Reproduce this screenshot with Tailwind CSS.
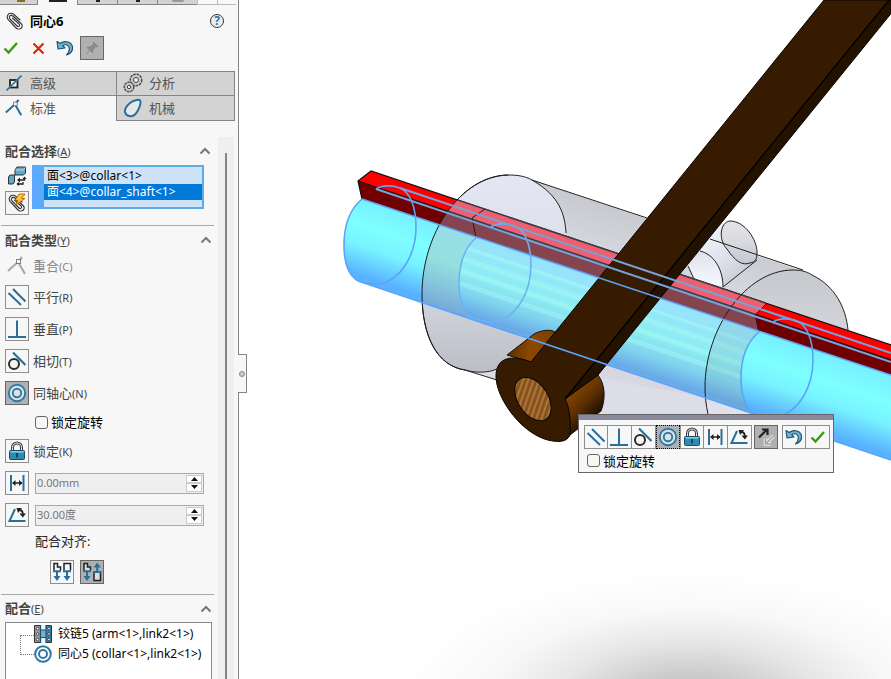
<!DOCTYPE html>
<html lang="zh-CN">
<head>
<meta charset="utf-8">
<title>同心6</title>
<script src="https://cdn.jsdelivr.net/npm/@tailwindcss/browser@4"></script>
</head>
<body class="h-screen overflow-hidden flex bg-white text-[#444] text-[13px] leading-4 font-['Noto_Sans','Noto_Sans_CJK_SC',sans-serif]">

<svg class="hidden" aria-hidden="true">
  <defs>
    <symbol id="i-clip" viewBox="0 0 18 18"><g fill="none" stroke="#333" stroke-width="1.1" stroke-linecap="round"><path d="M14 8 8 2.500C5.500.5 3 1 1.800 3S1.200 6.500 2.500 8L9.500 15.500C11.500 17.500 14 17.300 15.300 16S16.500 13 15 11.500L7 4C5.500 3 4 3.200 3.500 4.500S3.500 6.500 4.500 7.500L11 14C12 15 13.300 14.500 13.500 13.500S13 12 12.500 11.500L6.500 6"/></g></symbol>
    <symbol id="i-check" viewBox="0 0 16 16"><path d="M1.500 8.500 5.500 12.500 14 3" fill="none" stroke="#3a9c0c" stroke-width="2.400"/></symbol>
    <symbol id="i-undo" viewBox="1 1 22 22"><path d="M4 5.500 5 13 12 12 9.700 9.700C12.500 7.800 16 9 16.300 12.500 16.500 15 15.500 17 13.500 19 18 17.500 20 14.500 19.500 11 18.800 6 12 3.800 7.300 7.500Z" fill="#6db3cf" stroke="#1d4f6b" stroke-width="1.100" stroke-linejoin="round"/></symbol>
    <symbol id="i-par" viewBox="1 1 22 22"><path d="M3.500 8 16 20M8 4 20.500 16.500" stroke="#28709a" stroke-width="2"/></symbol>
    <symbol id="i-perp" viewBox="1 1 22 22"><path d="M12 3.500V20M3 20H21" stroke="#28709a" stroke-width="2"/></symbol>
    <symbol id="i-tan" viewBox="1 1 22 22"><path d="M8 3.500 20.500 16" stroke="#28709a" stroke-width="2.200"/><circle cx="9" cy="15" r="5" fill="#f4f4f4" stroke="#2b2b2b" stroke-width="2"/></symbol>
    <symbol id="i-con" viewBox="1 1 22 22"><circle cx="12" cy="12" r="9" fill="#dbe3e6"/><g fill="none" stroke="#2f78a3" stroke-width="1.900"><circle cx="12" cy="12" r="8.200"/><circle cx="12" cy="12" r="4.200"/></g></symbol>
    <symbol id="i-lock" viewBox="1 1 22 22"><path d="M7.500 12V8.500C7.500 2.500 16.500 2.500 16.500 8.500V12" fill="none" stroke="#3d3d3d" stroke-width="3"/><path d="M7.500 12V8.500C7.500 2.500 16.500 2.500 16.500 8.500V12" fill="none" stroke="#eee" stroke-width="1"/><rect x="4.500" y="11.500" width="15" height="9" rx="1" fill="#2f8ab2" stroke="#174b66"/><path d="M5.500 12.800H18.500" stroke="#8cd0e8" stroke-width="1.500"/><path d="M12 14V18.500" stroke="#12384d" stroke-width="1.600"/></symbol>
    <symbol id="i-dist" viewBox="1 1 22 22"><path d="M6 4V20M18.500 4V20" stroke="#28709a" stroke-width="2"/><path d="M8 12H17" stroke="#222" stroke-width="1.500"/><path d="M7 12 10.500 9V15ZM17.500 12 14 9V15Z" fill="#222"/></symbol>
    <symbol id="i-ang" viewBox="1 1 22 22"><path d="M10 6 4.500 18H20.500" fill="none" stroke="#28709a" stroke-width="2"/><path d="M14 7C16.500 7 17.800 8.500 17.800 11" fill="none" stroke="#222" stroke-width="1.800"/><path d="M11.500 5H17L13 10ZM14.500 10.500H21L17.800 14.500Z" fill="#222"/></symbol>
    <symbol id="i-coin" viewBox="1 1 22 22"><path d="M3 17 14 7M12.500 7 20 20M14 7 17 3" fill="none" stroke="currentColor" stroke-width="2.200"/><rect x="11.500" y="5.500" width="4" height="4" fill="#f7f7f7" stroke="#555" stroke-opacity=".7"/></symbol>
    <symbol id="i-flip" viewBox="1 1 22 22"><path d="M19.500 11 12.500 18M11.500 13.500V19H17" fill="none" stroke="#e8e8e8" stroke-width="3.600"/><path d="M19.500 11 12.500 18M11.500 13.500V19H17" fill="none" stroke="#a5a5a5" stroke-width="1.600"/><path d="M5 12.500 12.500 5M8 4.500H13.500V10" fill="none" stroke="#222" stroke-width="2.200"/></symbol>
    <symbol id="i-up" viewBox="0 0 12 8"><path d="M1.500 6.500 6 2 10.500 6.500" fill="none" stroke="#777" stroke-width="2"/></symbol>
    <symbol id="i-gear" viewBox="0 0 20 20"><g fill="#c8c8c8" stroke="#444"><circle cx="13" cy="7" r="5.800" stroke-dasharray="2.600 .8" stroke-width="1.300"/><circle cx="13" cy="7" r="2.500" fill="#eee"/><circle cx="6" cy="14" r="4.800" stroke-dasharray="2.600 .8" stroke-width="1.300"/><circle cx="6" cy="14" r="1.700" fill="#eee"/></g></symbol>
    <symbol id="i-arrowdn" viewBox="0 0 8 12"><path d="M0 1.200H8M4 1V7" stroke="#28709a" stroke-width="2"/><path d="M.5 6H7.500L4 11Z" fill="#28709a"/></symbol>
  </defs>
</svg>

<!-- Property panel -->
<aside class="relative w-[239px] shrink-0 h-full flex flex-col bg-[#f7f7f7] border-r border-[#858585]">
  <div class="flex h-[5px] shrink-0 overflow-hidden">
    <span class="w-[38px] bg-[#d3d3d3] border-r border-b border-[#858585] flex justify-end pr-3"><i class="w-2 h-[2px] bg-[#8c6b20]"></i></span>
    <span class="w-[39px] flex justify-center"><i class="w-[18px] h-[2px] bg-[#222]"></i></span>
    <span class="w-[41px] bg-[#d3d3d3] border-x border-b border-[#858585] flex justify-center"><i class="w-1 h-[2px] bg-[#222]"></i></span>
    <span class="w-10 bg-[#d3d3d3] border-r border-b border-[#858585] flex justify-center"><i class="w-1 h-[2px] bg-[#222]"></i></span>
    <span class="w-[39px] bg-[#d3d3d3] border-b border-[#858585] flex justify-center"><i class="w-3 h-[2px] rounded-b-full bg-[#999]"></i></span>
    <span class="w-[21px] border-x border-b border-[#bbb]"></span>
    <span class="w-[18px] border-b border-[#bbb]"></span>
  </div>
  <header class="flex items-center h-8 shrink-0 pl-1.5 pr-3.5">
    <svg class="size-[18px]"><use href="#i-clip"/></svg>
    <h1 class="ml-1.5 flex-1 font-bold text-[13px] text-black">同心6</h1>
    <button aria-label="帮助" class="size-[14px] rounded-full border border-[#333] bg-[#eee] text-[#2477a5] text-[12px] leading-3 font-bold flex items-center justify-center">?</button>
  </header>
  <div class="flex items-center h-[22px] shrink-0 pl-[3px] gap-3">
    <button aria-label="确定"><svg class="size-4"><use href="#i-check"/></svg></button>
    <button aria-label="取消"><svg class="size-4" viewBox="0 0 16 16"><path d="M2.500 3.500 12.500 13.500M12.500 3.500 2.500 13.500" stroke="#dc2600" stroke-width="2.200"/></svg></button>
    <div class="-ml-[5px] flex items-center gap-1">
      <button aria-label="撤消"><svg class="size-[22px]"><use href="#i-undo"/></svg></button>
      <button aria-label="保持可见" class="size-6 border border-[#666] bg-[#b0b0b0] flex items-center justify-center"><svg class="size-4" viewBox="0 0 16 16"><path d="M2 14 6 10 3 7.500 6 7 9.500 4.500V2L14 6.500H11.500L9 10 8.500 13 6 10" fill="#8b8b8b" stroke="#828282" stroke-width=".8"/></svg></button>
    </div>
  </div>
  <nav class="mt-3 mr-[3px] grid grid-cols-[116px_1fr] auto-rows-[25px] shrink-0 text-[#555]">
    <button class="flex items-center pl-1.5 gap-2 pb-px bg-[#d3d3d3] border-y border-[#858585]"><svg class="size-4" viewBox="0 0 16 16"><rect x="4" y="5" width="7.500" height="7.500" fill="#eee" stroke="#222" stroke-width="1.800"/><path d="M.5 15.500 15.500.5" stroke="#2f78a3" stroke-width="1.600"/></svg>高级</button>
    <button class="flex items-center pl-1.5 gap-1.5 pb-px bg-[#d3d3d3] border border-[#858585]"><svg class="size-5"><use href="#i-gear"/></svg>分析</button>
    <button class="flex items-center pl-1 gap-1.5 pb-px text-[#28709a]"><svg class="size-5"><use href="#i-coin"/></svg><span class="text-[#555]">标准</span></button>
    <button class="flex items-center pl-1.5 gap-1.5 pb-px bg-[#d3d3d3] border border-t-0 border-[#858585]"><svg class="size-5" viewBox="0 0 20 20"><path d="M7 5C11 2 17 .5 17.500 3.500 18 6 15.500 13 12 16.500 9 19.500 3 18.500 2 14 1.500 10.500 4 7.500 7 5Z" fill="#e4e9eb" stroke="#28709a" stroke-width="2"/></svg>机械</button>
  </nav>

  <div class="flex flex-1 min-h-0 pt-4 pr-1">
    <div class="flex-1 min-w-0 flex flex-col">
      <section class="px-[5px] pb-2.5">
        <h2 class="flex items-center h-7 pr-0.5 font-bold text-[#444]"><span class="flex-1">配合选择<span class="font-normal text-[11px]">(<u>A</u>)</span></span><svg class="w-3 h-2"><use href="#i-up"/></svg></h2>
        <div class="flex gap-[3px] pr-[9px]">
          <div class="w-6 flex flex-col items-center gap-1">
            <svg class="w-5 h-[22px]" viewBox="0 0 20 22"><g stroke="#222" stroke-width=".9"><path d="M8 5 10 2H18.500V8L16.500 10H8Z" fill="#5fa8c8"/><path d="M8.500 5H16.500L18 2.500" stroke="#bfe3f0" fill="none"/><path d="M1.500 12 3 10H7.500V17L6 19H1.500Z" fill="#5fa8c8"/></g><path d="M17.500 13V15H12M10 19H16V17" fill="none" stroke="#222" stroke-width="1.300"/><path d="M13 12.500V17.500L10 15ZM15.500 14H19.500L17.500 11.500ZM12 17V21L9.500 19Z" fill="#222"/></svg>
            <button aria-label="多配合模式" class="size-6 border border-[#8e8e8e] bg-[#f4f4f4] flex items-center justify-center"><svg class="size-5" viewBox="0 0 20 20"><svg width="18" height="18" x="1" y="1"><use href="#i-clip"/></svg><path d="M12 1H18L14.500 5.500H18L8 12.500 11 7.500H8Z" fill="#ffc52e" stroke="#a55a00" stroke-width=".8"/></svg></button>
          </div>
          <div class="flex-1 min-w-0 flex h-11">
            <div class="w-2.5 bg-[#5aa9ff]"></div>
            <ul role="listbox" aria-label="要配合的实体" class="flex-1 min-w-0 border-2 border-[#5aade8] bg-[#cfe3f8] text-black text-[12px] leading-4 pt-px whitespace-nowrap">
              <li role="option" class="pl-[3px]">面&lt;3&gt;@collar&lt;1&gt;</li>
              <li role="option" aria-selected="true" class="pl-[3px] bg-[#0078d7] text-white">面&lt;4&gt;@collar_shaft&lt;1&gt;</li>
            </ul>
          </div>
        </div>
      </section>

      <section class="ml-px mr-1 border-t border-[#a9a9a9] pl-1 pr-1.5 pb-2.5">
        <h2 class="flex items-center h-7 font-bold"><span class="flex-1">配合类型<span class="font-normal text-[11px]">(<u>Y</u>)</span></span><svg class="w-3 h-2 -mr-1"><use href="#i-up"/></svg></h2>
        <button class="flex items-center gap-1 h-6 mb-[3px] text-[#888]"><span class="size-6 flex items-center justify-center text-[#aaa]"><svg class="size-[22px]"><use href="#i-coin"/></svg></span><span>重合<span class="text-[11px]">(C)</span></span></button>
        <button class="flex items-center gap-1 h-8"><span class="size-6 border border-[#8e8e8e]"><svg class="size-[22px]"><use href="#i-par"/></svg></span><span>平行<span class="text-[11px]">(R)</span></span></button>
        <button class="flex items-center gap-1 h-8"><span class="size-6 border border-[#8e8e8e]"><svg class="size-[22px]"><use href="#i-perp"/></svg></span><span>垂直<span class="text-[11px]">(P)</span></span></button>
        <button class="flex items-center gap-1 h-8"><span class="size-6 border border-[#8e8e8e]"><svg class="size-[22px]"><use href="#i-tan"/></svg></span><span>相切<span class="text-[11px]">(T)</span></span></button>
        <button aria-pressed="true" class="flex items-center gap-1 h-8"><span class="size-6 border border-[#666] bg-[#b0b0b0]"><svg class="size-[22px]"><use href="#i-con"/></svg></span><span>同轴心<span class="text-[11px]">(N)</span></span></button>
        <label class="flex items-center gap-[3px] h-[26px] pl-[30px] text-black"><input type="checkbox" class="appearance-none size-[13px] rounded-[3px] border border-[#666] bg-[#f7f7f7]">锁定旋转</label>
        <button class="flex items-center gap-1 h-8"><span class="size-6 border border-[#8e8e8e]"><svg class="size-[22px]"><use href="#i-lock"/></svg></span><span>锁定<span class="text-[11px]">(K)</span></span></button>
        <div class="flex items-center gap-1.5 h-8 pr-1">
          <button aria-label="距离" class="size-6 shrink-0 border border-[#8e8e8e]"><svg class="size-[22px]"><use href="#i-dist"/></svg></button>
          <div class="flex-1 min-w-0 flex h-[21px] border border-[#a9a9a9] bg-[#efefef] p-px">
            <input aria-label="距离值" value="0.00mm" class="flex-1 min-w-0 text-[11px] text-[#777]">
            <div class="w-4 flex flex-col text-[#111]">
              <button aria-label="增加" class="flex-1 bg-white border border-[#ccc] flex items-center justify-center"><svg class="w-[7px] h-1" viewBox="0 0 7 4"><path d="M0 4 3.500 0 7 4Z" fill="currentColor"/></svg></button>
              <button aria-label="减少" class="flex-1 bg-white border border-[#ccc] flex items-center justify-center"><svg class="w-[7px] h-1" viewBox="0 0 7 4"><path d="M0 0 3.500 4 7 0Z" fill="currentColor"/></svg></button>
            </div>
          </div>
        </div>
        <div class="flex items-center gap-1.5 h-8 pr-1">
          <button aria-label="角度" class="size-6 shrink-0 border border-[#8e8e8e]"><svg class="size-[22px]"><use href="#i-ang"/></svg></button>
          <div class="flex-1 min-w-0 flex h-[21px] border border-[#a9a9a9] bg-[#efefef] p-px">
            <input aria-label="角度值" value="30.00度" class="flex-1 min-w-0 text-[11px] text-[#777]">
            <div class="w-4 flex flex-col text-[#111]">
              <button aria-label="增加" class="flex-1 bg-white border border-[#ccc] flex items-center justify-center"><svg class="w-[7px] h-1" viewBox="0 0 7 4"><path d="M0 4 3.500 0 7 4Z" fill="currentColor"/></svg></button>
              <button aria-label="减少" class="flex-1 bg-white border border-[#ccc] flex items-center justify-center"><svg class="w-[7px] h-1" viewBox="0 0 7 4"><path d="M0 0 3.500 4 7 0Z" fill="currentColor"/></svg></button>
            </div>
          </div>
        </div>
        <p class="h-5 leading-5 pl-[30px] text-[#222]">配合对齐:</p>
        <div class="flex gap-1.5 pt-[9px] pl-[45px]">
          <button aria-label="同向对齐" class="size-6 border border-[#8e8e8e]"><svg class="size-[22px]" viewBox="1 1 22 22"><path d="M4 10.500V3.500H7.500V7H10.500V10.500M14 10.500V3.500H20.500V10.500" fill="none" stroke="#222" stroke-width="1.500"/><svg x="3" y="10" width="8" height="12"><use href="#i-arrowdn"/></svg><svg x="13" y="10" width="8" height="12"><use href="#i-arrowdn"/></svg></svg></button>
          <button aria-label="反向对齐" aria-pressed="true" class="size-6 border border-[#666] bg-[#b0b0b0]"><svg class="size-[22px]" viewBox="1 1 22 22"><path d="M4 10.500V3.500H7.500V7H10.500V10.500M14 13V20.500H20.500V13" fill="#ddd" stroke="#222" stroke-width="1.500"/><svg x="3" y="10" width="8" height="12"><use href="#i-arrowdn"/></svg><path d="M13 12H21.500M17.200 12V7" stroke="#28709a" stroke-width="2"/><path d="M13.500 7.500H21L17.200 2.500Z" fill="#28709a"/></svg></button>
        </div>
      </section>

      <section class="ml-px mr-1 border-t border-[#a9a9a9] pl-1 pr-0.5 flex-1 min-h-0 flex flex-col">
        <h2 class="flex items-center h-[27px] shrink-0 font-bold"><span class="flex-1">配合<span class="font-normal text-[11px]">(<u>E</u>)</span></span><svg class="w-3 h-2"><use href="#i-up"/></svg></h2>
        <ul class="relative flex-1 border border-b-0 border-[#858990] bg-white pt-px pl-7 text-black text-[12px] whitespace-nowrap overflow-hidden">
          <li class="absolute left-3.5 top-3 w-3.5 h-5 border border-r-0 border-dotted border-[#777]" aria-hidden="true"></li>
          <li class="flex items-center h-5 gap-1.5"><svg class="size-[18px] shrink-0" viewBox="0 0 18 18"><path d="M.5.5H17.500V17.500H.5Z" fill="#999" stroke="#333"/><path d="M7 0H12V18H7Z" fill="#e8f5fa"/><path d="M12.500 1H17V17H12.500Z" fill="#3285aa"/><path d="M6.500 5H12V12.500H6.500Z" fill="#6fb6d2"/><path d="M6.500 0V18M12 0V18M6 5H12M6 12.500H12" stroke="#1d4f6b" stroke-width="1.200"/><g fill="#fff" stroke="#222" stroke-width=".7"><circle cx="3.500" cy="3.500" r="1.300"/><circle cx="3.500" cy="9" r="1.300"/><circle cx="3.500" cy="14.500" r="1.300"/><circle cx="15" cy="3.500" r="1.300"/><circle cx="15" cy="9" r="1.300"/><circle cx="15" cy="14.500" r="1.300"/></g></svg><span>铰链5 (arm&lt;1&gt;,link2&lt;1&gt;)</span></li>
          <li class="flex items-center h-5 gap-1.5"><svg class="size-[18px] shrink-0" viewBox="0 0 18 18"><g fill="none" stroke="#2f78a3" stroke-width="2"><circle cx="9" cy="9" r="7.800"/><circle cx="9" cy="9" r="4"/></g></svg><span>同心5 (collar&lt;1&gt;,link2&lt;1&gt;)</span></li>
        </ul>
      </section>
    </div>
    <div class="w-4 bg-[#efefef] pt-4 flex justify-center" aria-hidden="true"><div class="w-[2px] bg-[#858585]"></div></div>
  </div>
  <button aria-label="折叠面板" class="absolute z-10 -right-[9px] top-[354px] w-[9px] h-[39px] bg-[#f7f7f7] border border-l-0 border-[#858585] flex items-center justify-center"><span class="size-[6px] rounded-full border border-[#888] bg-[#ccc]"></span></button>
</aside>

<!-- Graphics area -->
<main class="relative flex-1 min-w-0 bg-white">
  <svg class="block w-full h-full" viewBox="239 0 652 679" preserveAspectRatio="xMinYMin slice" role="img" aria-label="装配体模型">
    <defs>
      <radialGradient id="floor" gradientUnits="userSpaceOnUse" cx="0" cy="0" r="1" gradientTransform="translate(690 700) scale(290 128)"><stop offset="0" stop-color="#bdbdbd"/><stop offset=".2" stop-color="#cbcbcb"/><stop offset=".45" stop-color="#e6e6e6"/><stop offset=".7" stop-color="#f8f8f8"/><stop offset="1" stop-color="#fff"/></radialGradient>
      <linearGradient id="shaft" gradientUnits="userSpaceOnUse" x1="362" y1="199" x2="336" y2="276"><stop offset="0" stop-color="#78f0ff"/><stop offset=".3" stop-color="#7dffff"/><stop offset=".55" stop-color="#78f3ff"/><stop offset=".9" stop-color="#58b2ff"/><stop offset="1" stop-color="#58b2ff"/></linearGradient>
      <linearGradient id="shaftIn" gradientUnits="userSpaceOnUse" x1="476" y1="237" x2="450" y2="314"><stop offset="0" stop-color="#98e2fc"/><stop offset=".45" stop-color="#8ceef2"/><stop offset=".7" stop-color="#80d4ee"/><stop offset=".92" stop-color="#68aae8"/><stop offset="1" stop-color="#70b2ea"/></linearGradient>
      <linearGradient id="shaftVeil" gradientUnits="userSpaceOnUse" x1="362" y1="199" x2="336" y2="276"><stop offset="0" stop-color="#98dde8"/><stop offset=".4" stop-color="#95e0df"/><stop offset=".7" stop-color="#86c5da"/><stop offset="1" stop-color="#72a5da"/></linearGradient>
      <linearGradient id="faceL" x1="0" y1="0" x2="0" y2="1"><stop offset="0" stop-color="#e4e6f4"/><stop offset=".5" stop-color="#dadce6"/><stop offset="1" stop-color="#bcbec6"/></linearGradient>
      <linearGradient id="body" gradientUnits="userSpaceOnUse" x1="690" y1="230" x2="635" y2="420"><stop offset="0" stop-color="#c8cacf"/><stop offset=".35" stop-color="#dcdee8"/><stop offset=".8" stop-color="#d6d6e0"/><stop offset="1" stop-color="#e6e6f2"/></linearGradient>
      <linearGradient id="faceR" x1="0" y1="0" x2="0" y2="1"><stop offset="0" stop-color="#c6c8cd"/><stop offset=".5" stop-color="#d5d7dd"/><stop offset="1" stop-color="#e2e2ee"/></linearGradient>
      <linearGradient id="boss" gradientUnits="userSpaceOnUse" x1="705" y1="235" x2="750" y2="285"><stop offset="0" stop-color="#f0f1fa"/><stop offset=".5" stop-color="#dcdfe9"/><stop offset="1" stop-color="#c0c2ca"/></linearGradient>
      <linearGradient id="bossFace" x1="0" y1="0" x2="0" y2="1"><stop offset="0" stop-color="#dfe1ec"/><stop offset="1" stop-color="#f8f9ff"/></linearGradient>
      <linearGradient id="bossTop" x1="0" y1="0" x2="0" y2="1"><stop offset="0" stop-color="#e4e4e6"/><stop offset=".5" stop-color="#d9dade"/><stop offset="1" stop-color="#c4c6d2"/></linearGradient>
      <linearGradient id="hubTop" gradientUnits="userSpaceOnUse" x1="510" y1="345" x2="550" y2="352"><stop offset="0" stop-color="#5a3000"/><stop offset=".5" stop-color="#8c4800"/><stop offset="1" stop-color="#7c4000"/></linearGradient>
      <linearGradient id="hubSide" gradientUnits="userSpaceOnUse" x1="572" y1="388" x2="600" y2="415"><stop offset="0" stop-color="#8a4600"/><stop offset=".5" stop-color="#5c2f00"/><stop offset="1" stop-color="#150b00"/></linearGradient>
      <pattern id="bore" width="40" height="5" patternUnits="userSpaceOnUse" patternTransform="rotate(-38)"><rect width="40" height="5" fill="#8a5219"/><path d="M0 2H40" stroke="#b08350" stroke-width="1.600"/></pattern>
      <pattern id="stripes" width="14" height="12" patternUnits="userSpaceOnUse" patternTransform="translate(476 248) rotate(18.400)"><rect width="14" height="5" fill="#b0fff4" fill-opacity=".35"/></pattern>
      <path id="shaftEnd" d="M362 199C350 209 344 225 344 245C344 267 351 281 364 283L380 284C402 279 416 254 416 227C416 207 410 192 400 188C392 185 382 185 376 189"/>
      <path id="collarL" d="M508 175C460 176 422 234 422 294C422 336 437 366 465 370C478 373 489 372 497 369L566 345V233C565 215 560 196 532 180C525 176 517 175 508 175Z"/>
      <clipPath id="inside"><path d="M508 175C460 176 422 234 422 294C422 336 437 366 465 370L708 460L764 417C748 415 741 399 741 377C741 357 748 342 759 332L755 315L766 304V290Z"/></clipPath>
      <clipPath id="core"><path d="M476 237C465 247 458 263 458 283C458 303 464 318 478 322L764 417C748 415 741 399 741 377C741 357 748 342 759 332Z"/></clipPath>
    </defs>
    <rect x="239" y="560" width="652" height="119" fill="url(#floor)"/>

    <!-- collar -->
    <path d="M532 180 803 271 848 340V415H640L465 370 508 300Z" fill="url(#body)"/>
    <path d="M497 380 465 370 500 360 720 400V415H600Z" fill="#dddde8"/>
    <use href="#collarL" fill="url(#faceL)"/>
    <path d="M793 270C745 270 705 330 705 387C705 397 706 405 708 415H848V330C846 308 835 286 812 275C806 271 800 270 793 270Z" fill="url(#faceR)"/>
    <path d="M700 251 721 222 757 252V262L722 288 694 290Z" fill="url(#boss)"/>
    <path d="M700 251C713 254 723 268 723 287L694 279 688 266Z" fill="url(#bossFace)"/>
    <path d="M730 221C720 222 718 240 727 249C735 261 742 266 750 263C756 262 757 258 757 252C757 240 745 221 730 221Z" fill="url(#bossTop)"/>
    <g fill="none" stroke="#222" stroke-width="1">
      <path d="M532 180 647 218M497 369C488 373 475 373 465 370L497 380M710 239 803 270M793 270C800 270 806 271 812 275C835 286 846 308 848 330"/>
      <path d="M566 233C565 215 560 196 532 180C525 176 517 175 508 175C460 176 422 234 422 294C422 336 437 366 465 370"/>
      <path d="M700 251C713 254 723 268 723 287L757 260M688 266 694 279M730 221C720 222 718 240 727 249C735 261 742 266 750 263C756 262 757 258 757 252C757 240 745 221 730 221Z"/>
    </g>

    <!-- key and shaft outside the collar -->
    <path d="M362 199C350 209 344 225 344 245C344 267 351 281 364 283L900 463V378Z" fill="url(#shaft)"/>
    <path d="M358 181 900 363V378L362 199Z" fill="#700000"/>
    <path d="M358 181 371 171 900 348V363Z" fill="#ff0000"/>
    <path d="M362 199 358 181 371 171 900 348M358 181 900 363" fill="none" stroke="#111" stroke-width="1.200"/>

    <!-- key and shaft seen through the collar -->
    <g clip-path="url(#inside)">
      <path d="M362 199 364 283 900 463V378Z" fill="url(#shaftVeil)"/>
      <g clip-path="url(#core)"><path d="M440 225 440 310 780 424V339Z" fill="url(#shaftIn)"/><path d="M440 237 440 285 780 399V351Z" fill="url(#stripes)"/><path d="M730 310C712 338 705 362 705 387L708 415H770V310Z" fill="#7f98a4" fill-opacity=".16"/></g>
      <path d="M358 181 900 363V378L362 199Z" fill="#84454f"/>
      <path d="M358 181 371 171 900 348V363Z" fill="#ee606e"/>
      <path d="M371 171 900 348M358 181 900 363" fill="none" stroke="#3d3d48" stroke-width="1.600"/>
    </g>
    <path d="M476 237 472 218 485 209M759 332 755 315 766 304" fill="none" stroke="#26161b" stroke-width="1"/>
    <path d="M508 175C460 176 422 234 422 294C422 336 437 366 465 370M793 270C745 270 705 330 705 387C705 397 706 405 708 414" fill="none" stroke="#1b1b1b" stroke-width="1"/>

    <!-- link arm and hub -->
    <path d="M507 355 534 334C542 330 550 329 555 332L560 345 531 362Z" fill="url(#hubTop)" stroke="#111"/>
    <path d="M565 399 598 375C605 384 606 398 601 411L570 435Z" fill="url(#hubSide)" stroke="#111"/>
    <path d="M824 0H889L565 399C570 408 571 423 570 435C567 442 559 442 553 441C542 440 529 432 520 423C508 411 496 392 496 376C496 360 508 353 531 362Z" fill="#361b00" stroke="#080400"/>
    <path d="M889 0H902L598 375 565 399Z" fill="#241200" stroke="#080400"/>
    <path d="M889 0 565 399" stroke="#000" stroke-width="1.200"/>
    <ellipse cx="533" cy="399" rx="15" ry="24" transform="rotate(-33 533 399)" fill="url(#bore)" stroke="#0c0600"/>

    <!-- highlighted edges -->
    <g fill="none" stroke="#5aa4fa" stroke-width="1.600">
      <use href="#shaftEnd"/>
      <use href="#shaftEnd" transform="translate(115 38)" stroke="#6cb2f2"/>
      <use href="#shaftEnd" transform="translate(397 133)"/>
      <path d="M362 199 891 375M364 283 891 460"/>
      <path d="M400 188 891 353M376 189 891 362" stroke="#74a2dc" stroke-width="2"/>
    </g>
  </svg>

  <!-- Context toolbar -->
  <div class="absolute left-[339px] top-[414px] border border-[#666] bg-[#f7f7f7]">
    <div class="h-[5px] bg-[#8a8a9b]"></div>
    <div class="flex pt-[5px] px-[5px] pr-[3px]">
      <button aria-label="平行" class="size-6 border border-[#8e8e8e]"><svg class="size-[22px]"><use href="#i-par"/></svg></button>
      <button aria-label="垂直" class="size-6 border border-l-0 border-[#8e8e8e]"><svg class="size-[22px]"><use href="#i-perp"/></svg></button>
      <button aria-label="相切" class="size-6 border border-l-0 border-[#8e8e8e]"><svg class="size-[22px]"><use href="#i-tan"/></svg></button>
      <button aria-label="同轴心" aria-pressed="true" class="size-6 border border-dotted border-black bg-[#b0b0b0]"><svg class="size-[22px]"><use href="#i-con"/></svg></button>
      <button aria-label="锁定" class="size-6 border border-[#8e8e8e]"><svg class="size-[22px]"><use href="#i-lock"/></svg></button>
      <button aria-label="距离" class="size-6 border border-l-0 border-[#8e8e8e]"><svg class="size-[22px]"><use href="#i-dist"/></svg></button>
      <button aria-label="角度" class="size-6 border border-l-0 border-[#8e8e8e]"><svg class="size-[22px]"><use href="#i-ang"/></svg></button>
      <button aria-label="反转配合对齐" class="ml-0.5 size-6 border border-[#666] bg-[#b0b0b0]"><svg class="size-[22px]"><use href="#i-flip"/></svg></button>
      <button aria-label="撤消" class="ml-1 size-6 border border-[#8e8e8e]"><svg class="size-[22px]"><use href="#i-undo"/></svg></button>
      <button aria-label="确定" class="size-6 border border-l-0 border-[#8e8e8e] flex items-center justify-center"><svg class="size-4"><use href="#i-check"/></svg></button>
    </div>
    <label class="flex items-center gap-[3px] h-[23px] pl-2 text-black"><input type="checkbox" class="appearance-none size-[13px] rounded-[3px] border border-[#666] bg-[#f7f7f7]">锁定旋转</label>
  </div>
</main>
</body>
</html>
